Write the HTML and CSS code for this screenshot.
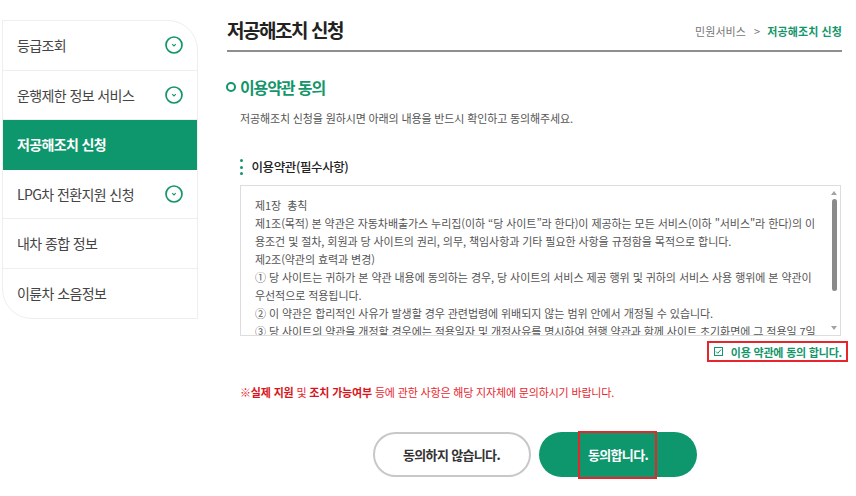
FILE: index.html
```html
<!DOCTYPE html>
<html lang="ko">
<head>
<meta charset="utf-8">
<title>저공해조치 신청</title>
<link rel="stylesheet" href="styles.css">
</head>
<body>
<div class="page">
  <nav class="side">
    <div class="side-item">등급조회<span class="chev"><svg width="18" height="18" viewBox="0 0 18 18"><circle cx="9" cy="9" r="8" fill="none" stroke="#14956b" stroke-width="1.7"/><path d="M7.2 8.2 L9 10 L10.8 8.2" fill="none" stroke="#14956b" stroke-width="1.1"/></svg></span></div>
    <div class="side-item">운행제한 정보 서비스<span class="chev"><svg width="18" height="18" viewBox="0 0 18 18"><circle cx="9" cy="9" r="8" fill="none" stroke="#14956b" stroke-width="1.7"/><path d="M7.2 8.2 L9 10 L10.8 8.2" fill="none" stroke="#14956b" stroke-width="1.1"/></svg></span></div>
    <div class="side-item active">저공해조치 신청</div>
    <div class="side-item">LPG차 전환지원 신청<span class="chev"><svg width="18" height="18" viewBox="0 0 18 18"><circle cx="9" cy="9" r="8" fill="none" stroke="#14956b" stroke-width="1.7"/><path d="M7.2 8.2 L9 10 L10.8 8.2" fill="none" stroke="#14956b" stroke-width="1.1"/></svg></span></div>
    <div class="side-item">내차 종합 정보</div>
    <div class="side-item last">이륜차 소음정보</div>
  </nav>
  <main class="main">
    <header class="head">
      <h1 class="title">저공해조치 신청</h1>
      <div class="crumb">민원서비스<span class="gt">&gt;</span><span class="cur">저공해조치 신청</span></div>
    </header>
    <h2 class="sec"><span class="ring"></span>이용약관 동의</h2>
    <p class="desc">저공해조치 신청을 원하시면 아래의 내용을 반드시 확인하고 동의해주세요.</p>
    <h3 class="sub"><span class="dots"><i></i><i></i><i></i></span>이용약관(필수사항)</h3>
    <div class="terms">
      <div class="terms-text">
        <p>제1장&nbsp; 총칙</p>
        <p>제1조(목적) 본 약관은 자동차배출가스 누리집(이하 “당 사이트”라 한다)이 제공하는 모든 서비스(이하 "서비스"라 한다)의 이<br>용조건 및 절차, 회원과 당 사이트의 권리, 의무, 책임사항과 기타 필요한 사항을 규정함을 목적으로 합니다.</p>
        <p>제2조(약관의 효력과 변경)</p>
        <p>① 당 사이트는 귀하가 본 약관 내용에 동의하는 경우, 당 사이트의 서비스 제공 행위 및 귀하의 서비스 사용 행위에 본 약관이<br>우선적으로 적용됩니다.</p>
        <p>② 이 약관은 합리적인 사유가 발생할 경우 관련법령에 위배되지 않는 범위 안에서 개정될 수 있습니다.</p>
        <p>③ 당 사이트의 약관을 개정할 경우에는 적용일자 및 개정사유를 명시하여 현행 약관과 함께 사이트 초기화면에 그 적용일 7일</p>
      </div>
      <div class="sbar">
        <span class="arr up"></span>
        <span class="track"><span class="thumb"></span></span>
        <span class="arr down"></span>
      </div>
    </div>
    <div class="agree-row">
      <label class="agree"><svg width="9" height="9" viewBox="0 0 9 9"><rect x="0.5" y="0.5" width="8" height="8" fill="#fff" stroke="#14956b"/><path d="M2 4.5 L3.8 6.3 L7 2.6" fill="none" stroke="#14956b" stroke-width="1"/></svg>이용 약관에 동의 합니다.</label>
    </div>
    <p class="note">※<b>실제 지원</b> 및 <b>조치 가능여부</b> 등에 관한 사항은 해당 지자체에 문의하시기 바랍니다.</p>
    <div class="btns">
      <button class="btn no">동의하지 않습니다.</button>
      <button class="btn yes"><span class="yes-in">동의합니다.</span></button>
    </div>
  </main>
</div>
</body>
</html>
```
FILE: styles.css
```css
* { box-sizing: border-box; }
html, body { margin: 0; padding: 0; background: #fff; }
body {
  font-family: "Noto Sans CJK KR", "Noto Sans", sans-serif;
  color: #444;
  width: 856px;
  height: 496px;
  overflow: hidden;
}
.page {
  display: flex;
  align-items: flex-start;
}
.side {
  width: 196px;
  margin: 20px 0 0 2px;
  border: 1px solid #eee;
  border-radius: 0 30px 0 30px;
  overflow: hidden;
}
.side-item {
  height: 49.5px;
  display: flex;
  align-items: center;
  justify-content: space-between;
  padding: 0 14px 0 14px;
  font-size: 14px;
  letter-spacing: -0.6px;
  color: #444;
  border-bottom: 1px solid #eee;
}
.side-item.last { border-bottom: 0; }
.side-item.active {
  background: #0e966c;
  color: #fff;
  font-weight: 700;
  letter-spacing: -0.65px;
  border-bottom-color: #0e966c;
}
.chev { display: flex; }
.main {
  width: 615px;
  margin-left: 29px;
}
.head {
  display: flex;
  justify-content: space-between;
  align-items: flex-end;
  height: 52px;
  padding-bottom: 9px;
  border-bottom: 2px solid #8e8e8e;
}
.title {
  margin: 0;
  font-size: 19px;
  line-height: 22px;
  font-weight: 700;
  color: #222;
  letter-spacing: -1.45px;
}
.crumb {
  font-size: 11px;
  line-height: 18px;
  color: #777;
  letter-spacing: 0.1px;
  margin-bottom: 1px;
}
.gt { margin: 0 7px 0 8px; }
.cur { color: #14956b; font-weight: 700; }
.sec {
  margin: 23px 0 0 0;
  display: flex;
  align-items: center;
  font-size: 16px;
  font-weight: 700;
  color: #14956b;
  letter-spacing: -1.1px;
  line-height: 24px;
}
.ring {
  width: 10px;
  height: 10px;
  border: 2.6px solid #14956b;
  border-radius: 50%;
  margin: 0 4px 0 -1px;
}
.desc {
  margin: 10px 0 0 13px;
  font-size: 11px;
  color: #555;
  letter-spacing: -0.14px;
  line-height: 18px;
}
.sub {
  margin: 30px 0 0 13px;
  display: flex;
  align-items: center;
  font-size: 12.5px;
  font-weight: 500;
  color: #222;
  letter-spacing: -0.4px;
  line-height: 20px;
}
.dots {
  display: flex;
  flex-direction: column;
  gap: 3.5px;
  margin-right: 8.5px;
}
.dots i {
  width: 3px;
  height: 3px;
  background: #14956b;
  border-radius: 50%;
}
.terms {
  margin: 8px 1px 0 13px;
  height: 151px;
  border: 1px solid #ddd;
  display: flex;
}
.terms-text {
  flex: 1;
  overflow: hidden;
  padding: 10px 0 0 14px;
  font-size: 11px;
  color: #555;
  line-height: 18px;
  letter-spacing: -0.07px;
  white-space: nowrap;
}
.terms-text p { margin: 0; }
.sbar {
  width: 12px;
  display: flex;
  flex-direction: column;
  align-items: center;
  padding: 5px 0 5px;
}
.arr {
  width: 0;
  height: 0;
  border-left: 3px solid transparent;
  border-right: 3px solid transparent;
}
.arr.up { border-bottom: 4px solid #a3a3a3; }
.arr.down { border-top: 4px solid #a3a3a3; }
.track {
  flex: 1;
  display: flex;
  justify-content: center;
  padding: 4px 0;
}
.thumb {
  width: 5px;
  height: 92px;
  background: #8a8a8a;
  border-radius: 3px;
}
.agree-row {
  display: flex;
  justify-content: flex-end;
  margin-right: -6px;
  margin-top: 5px;
}
.agree {
  display: flex;
  align-items: center;
  gap: 8px;
  height: 21px;
  padding: 0 4px 0 5px;
  border: 2px solid #e5262d;
  font-size: 11px;
  font-weight: 700;
  color: #14956b;
  letter-spacing: -0.2px;
}
.note {
  margin: 21px 0 0 13px;
  font-size: 11px;
  color: #e8262d;
  letter-spacing: -0.17px;
  line-height: 18px;
}
.note b { color: #d8141c; }
.btns {
  display: flex;
  justify-content: center;
  gap: 8px;
  margin-top: 31px;
}
.btn {
  width: 158px;
  height: 45px;
  border-radius: 23px;
  font-family: inherit;
  font-size: 13px;
  font-weight: 700;
  letter-spacing: -0.66px;
  display: flex;
  align-items: center;
  justify-content: center;
  padding: 0;
}
.btn.no {
  background: #fff;
  border: 2px solid #c8c8c8;
  color: #333;
}
.btn.yes {
  background: #0e966c;
  border: 0;
  color: #fff;
  letter-spacing: -0.67px;
}
.yes-in {
  height: 48px;
  flex: none;
  display: flex;
  align-items: center;
  padding: 0 7px 0 8px;
  border: 2px solid #e5262d;
}
```
